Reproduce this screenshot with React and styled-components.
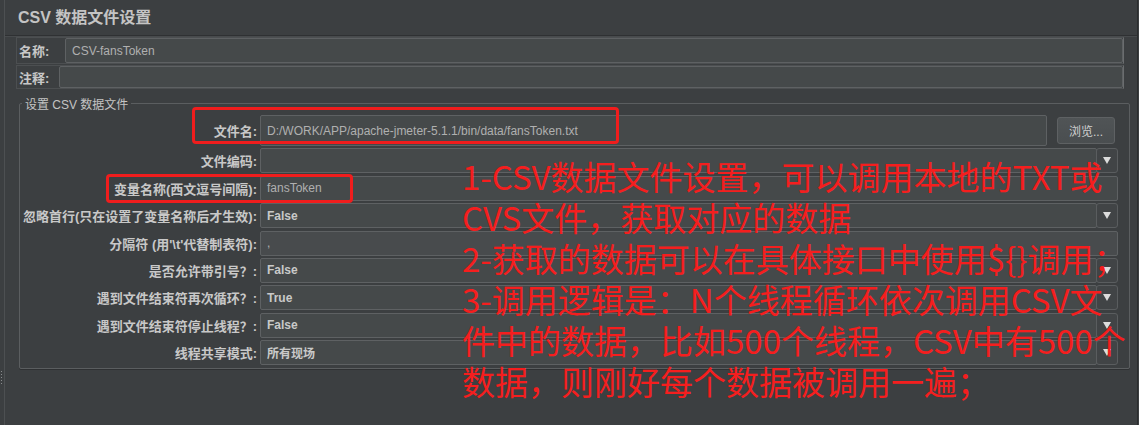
import React from "react";
import styled, { createGlobalStyle } from "styled-components";

const GlobalStyle = createGlobalStyle`
    html, body {
        margin: 0;
        padding: 0;
        background: #3c3f41;
    }
    body {
        font-family: "Liberation Sans", "Noto Sans CJK SC", sans-serif;
        color: #bbbbbb;
    }
`

const Page = styled.div`
    position: relative;
    display: flex;
    width: 1139px;
    height: 425px;
    overflow: hidden;
    background: #3c3f41;
`
const Splitter = styled.div`
    width: 5px;
    display: flex;
    flex-direction: column;
    padding-top: 370px;
`
const Grip = styled.div`
    width: 3px;
    height: 16px;
    background-image: radial-gradient(circle, #8a8d8f 0.7px, transparent 0.9px);
    background-size: 3px 3px;
`
const Panel = styled.div`
    flex: 1;
    display: flex;
    flex-direction: column;
    border-left: 1px solid #4d5052;
    border-right: 1px solid #2b2d2e;
    margin-right: 1px;
`
const Title = styled.div`
    height: 27px;
    padding: 8px 0 0 13px;
    font-size: 16px;
    line-height: 20px;
    font-weight: bold;
    color: #c4c4c4;
    border-bottom: 1px solid #2f3133;
    box-shadow: 0 1px 0 #484b4d;
`
const TopRow = styled.div`
    display: flex;
    align-items: center;
    height: ${p => p.h}px;
    margin: ${p => p.mt}px 13px 0 11px;
    border: 1px solid #4c4f51;
    border-right-color: #6a6d6f;
`
const TopLabel = styled.div`
    width: ${p => p.w}px;
    flex: none;
    padding-left: 2px;
    box-sizing: border-box;
    font-size: 13px;
    font-weight: bold;
    color: #c8c8c8;
`
const TextField = styled.div`
    box-sizing: border-box;
    flex: ${p => (p.w ? "none" : "1")};
    width: ${p => (p.w ? `${p.w}px` : "auto")};
    align-self: stretch;
    display: flex;
    align-items: center;
    padding-left: 6px;
    font-size: 12px;
    font-weight: ${p => (p.bold ? "bold" : "normal")};
    color: ${p => (p.bold ? "#c9c9c9" : "#b0b0b0")};
    background: ${p => (p.dim ? "#484b4d" : "#45494a")};
    border: 1px solid #5e6163;
    border-radius: 2px;
    min-width: 0;
    white-space: nowrap;
`
const Group = styled.fieldset`
    margin: 6px 7px 0 14px;
    padding: 3px 11px 3px 0;
    border: 1px solid #5b5e60;
    border-radius: 2px;
    box-shadow: 0 1px 0 #2f3133;
`
const Legend = styled.legend`
    margin-left: 2px;
    padding: 0 3px;
    font-size: 12px;
    color: #c4c4c4;
`
const FormGrid = styled.div`
    display: grid;
    grid-template-columns: 237px 1fr;
    grid-template-rows: 31px repeat(8, 25px);
    column-gap: 3px;
    row-gap: 2.4px;
`
const Label = styled.div`
    display: flex;
    align-items: center;
    justify-content: flex-end;
    font-size: 13px;
    font-weight: bold;
    color: #c8c8c8;
    white-space: nowrap;
`
const FieldLine = styled.div`
    display: flex;
    align-items: ${p => (p.center ? "center" : "stretch")};
    gap: 10px;
`
const Combo = styled.div`
    flex: 1;
    display: flex;
`
const ArrowBox = styled.div`
    width: 20px;
    display: flex;
    align-items: center;
    justify-content: center;
    background: #414446;
    border: 1px solid #5a5d5f;
    border-radius: 3px;
    margin-left: -1px;
    &::after {
        content: "";
        border-left: 4px solid transparent;
        border-right: 4px solid transparent;
        border-top: 7px solid #dcdcdc;
    }
`
const BrowseButton = styled.button`
    width: 58px;
    height: 27px;
    margin-right: 3px;
    padding: 0;
    font-family: "Liberation Sans", "Noto Sans CJK SC", sans-serif;
    font-size: 12px;
    color: #d0d0d0;
    background: linear-gradient(#505456, #4a4e50);
    border: 1px solid #5e6163;
    border-radius: 3px;
`
const RedBox = styled.div`
    position: absolute;
    left: ${p => p.x}px;
    top: ${p => p.y}px;
    width: ${p => p.w}px;
    height: ${p => p.h}px;
    box-sizing: border-box;
    border: 3px solid #f01d1d;
    border-radius: 4px;
    pointer-events: none;
`
const Note = styled.div`
    position: absolute;
    left: 462px;
    top: 156px;
    font-family: "Noto Sans CJK SC", sans-serif;
    font-size: 33px;
    line-height: 41px;
    color: #f51e1e;
    white-space: nowrap;
`

const rows = [
    { label: "文件编码:", combo: true },
    { label: "变量名称(西文逗号间隔):", value: "fansToken" },
    { label: "忽略首行(只在设置了变量名称后才生效):", value: "False", combo: true, bold: true },
    { label: "分隔符 (用'\\t'代替制表符):", value: ",", dim: true },
    { label: "是否允许带引号？:", value: "False", combo: true, bold: true },
    { label: "遇到文件结束符再次循环？:", value: "True", combo: true, bold: true },
    { label: "遇到文件结束符停止线程？:", value: "False", combo: true, bold: true },
    { label: "线程共享模式:", value: "所有现场", combo: true, bold: true },
]

const notes = [
    "1-CSV数据文件设置，可以调用本地的TXT或",
    "CVS文件，获取对应的数据",
    "2-获取的数据可以在具体接口中使用${}调用；",
    "3-调用逻辑是：N个线程循环依次调用CSV文",
    "件中的数据，比如500个线程，CSV中有500个",
    "数据，则刚好每个数据被调用一遍；",
]

export default function App() {
    return (
        <Page>
            <GlobalStyle />
            <Splitter><Grip /></Splitter>
            <Panel>
                <Title>CSV 数据文件设置</Title>
                <TopRow h={25} mt={1}>
                    <TopLabel w={48}>名称:</TopLabel>
                    <TextField>CSV-fansToken</TextField>
                </TopRow>
                <TopRow h={22} mt={1}>
                    <TopLabel w={42}>注释:</TopLabel>
                    <TextField />
                </TopRow>
                <Group>
                    <Legend>设置 CSV 数据文件</Legend>
                    <FormGrid>
                        <Label>文件名:</Label>
                        <FieldLine>
                            <TextField w={787}>
                                D:/WORK/APP/apache-jmeter-5.1.1/bin/data/fansToken.txt
                            </TextField>
                            <FieldLine center>
                                <BrowseButton>浏览...</BrowseButton>
                            </FieldLine>
                        </FieldLine>
                        {rows.map((row) => (
                            <React.Fragment key={row.label}>
                                <Label>{row.label}</Label>
                                <FieldLine>
                                    <Combo>
                                        <TextField bold={row.bold} dim={row.dim}>{row.value}</TextField>
                                        {row.combo && <ArrowBox />}
                                    </Combo>
                                </FieldLine>
                            </React.Fragment>
                        ))}
                    </FormGrid>
                </Group>
            </Panel>
            <RedBox x={192} y={107} w={427} h={37} />
            <RedBox x={106} y={174} w={247} h={29} />
            <Note>
                {notes.map((line) => (
                    <div key={line}>{line}</div>
                ))}
            </Note>
        </Page>
    )
}
